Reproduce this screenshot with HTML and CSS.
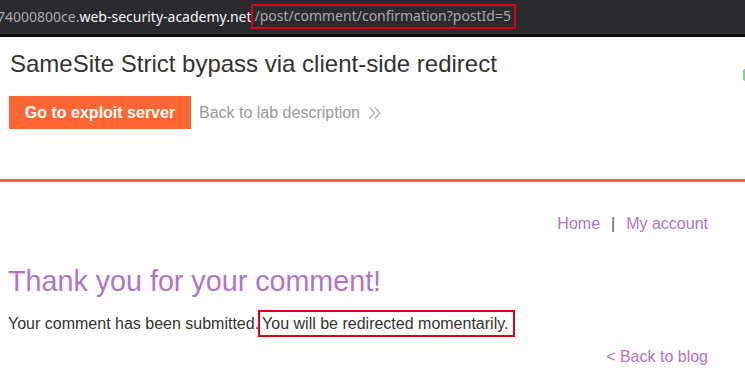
FILE: index.html
```html
<!DOCTYPE html>
<html>
<head>
<meta charset="utf-8">
<link rel="stylesheet" href="styles.css">
</head>
<body>
<div class="urlbar">
  <div class="url"><span class="dim first">74000800ce.</span><span class="host">web-security-academy.net</span><span class="path">/post/comment/confirmation?postId=5</span></div>
</div>
<div class="urlbar-edge"></div>
<header class="lab-header">
  <div class="lab-title-row">
    <h2 class="lab-title">SameSite Strict bypass via client-side redirect</h2>
    <div class="status-widget"></div>
  </div>
  <div class="lab-actions">
    <a class="btn-exploit">Go to exploit server</a>
    <a class="back-lab">Back to lab description
      <svg class="chev" width="14" height="14" viewBox="0 0 14 14"><polyline points="1.5,1.5 6.5,7 1.5,12.5" fill="none" stroke="#aaa" stroke-width="1.2"/><polyline points="7,1.5 12,7 7,12.5" fill="none" stroke="#aaa" stroke-width="1.2"/></svg>
    </a>
  </div>
</header>
<div class="orange-rule"></div>
<main class="main">
  <nav class="top-links"><a>Home</a><span class="sep">|</span><a>My account</a></nav>
  <h1 class="thanks">Thank you for your comment!</h1>
  <p class="msg">Your comment has been submitted.<span class="boxed">You will be redirected momentarily.</span></p>
  <div class="back-blog"><a>&lt; Back to blog</a></div>
</main>
</body>
</html>
```
FILE: styles.css
```css
* { box-sizing: border-box; }
html, body { margin: 0; padding: 0; background: #fff; }
body { font-family: "Liberation Sans", Arial, sans-serif; overflow: hidden; width: 745px; height: 388px; }

.urlbar {
  height: 34px;
  background: #2b2a2e;
  display: flex;
  align-items: center;
  overflow: hidden;
  border-bottom: 1px solid #3c3c40;
}
.urlbar-edge { height: 3px; background: #0c0c0d; }
.url {
  font-family: "Noto Sans", "Open Sans", sans-serif;
  font-size: 14px;
  white-space: nowrap;
  color: #a9a9ad;
  display: flex;
  align-items: center;
}
.first { margin-left: -3px; }
.host { color: #f4f4f6; }
.path {
  border: 2px solid #e0000f;
  padding: 1px 3px 2px 1px;
  line-height: 18px;
}

.lab-header { padding: 12px 0 0 9px; height: 142px; }
.lab-title-row { display: flex; justify-content: space-between; align-items: flex-start; }
.lab-title {
  margin: 0;
  font-size: 24px;
  font-weight: normal;
  color: #333332;
  line-height: 30px;
  padding-left: 1px;
}
.status-widget {
  width: 2px; height: 12px; background: #7bd870;
  margin-top: 20px; border-radius: 2px 0 0 2px;
}
.lab-actions { display: flex; align-items: center; margin-top: 15px; }
.btn-exploit {
  background: #ff6633;
  color: #fff;
  font-weight: bold;
  font-size: 16px;
  height: 33px;
  width: 182px;
  display: flex; align-items: center; justify-content: center;
}
.back-lab {
  color: #999;
  font-size: 16px;
  margin-left: 8px;
  display: flex; align-items: center;
}
.chev { margin-left: 8px; }

.orange-rule { height: 3px; background: #ff6633; }

.main { padding: 0 37px 0 8px; }
.top-links {
  display: flex; justify-content: flex-end; align-items: center;
  font-size: 16px; margin-top: 33px; color: #b274c8;
}
.top-links a { color: #b274c8; }
.sep { color: #555; margin: 0 11px; }
.thanks {
  margin: 31px 0 0 0;
  font-size: 28.7px;
  font-weight: normal;
  color: #b274c8;
  line-height: 34px;
}
.msg {
  margin: 12px 0 0 0;
  font-size: 16px;
  color: #333332;
  line-height: 28px;
}
.boxed {
  border: 2px solid #e0000f;
  padding: 3px 5px 3px 2px;
  margin-left: -1px;
}
.back-blog { display: flex; justify-content: flex-end; margin-top: 10px; font-size: 16px; }
.back-blog a { color: #b274c8; }
```
